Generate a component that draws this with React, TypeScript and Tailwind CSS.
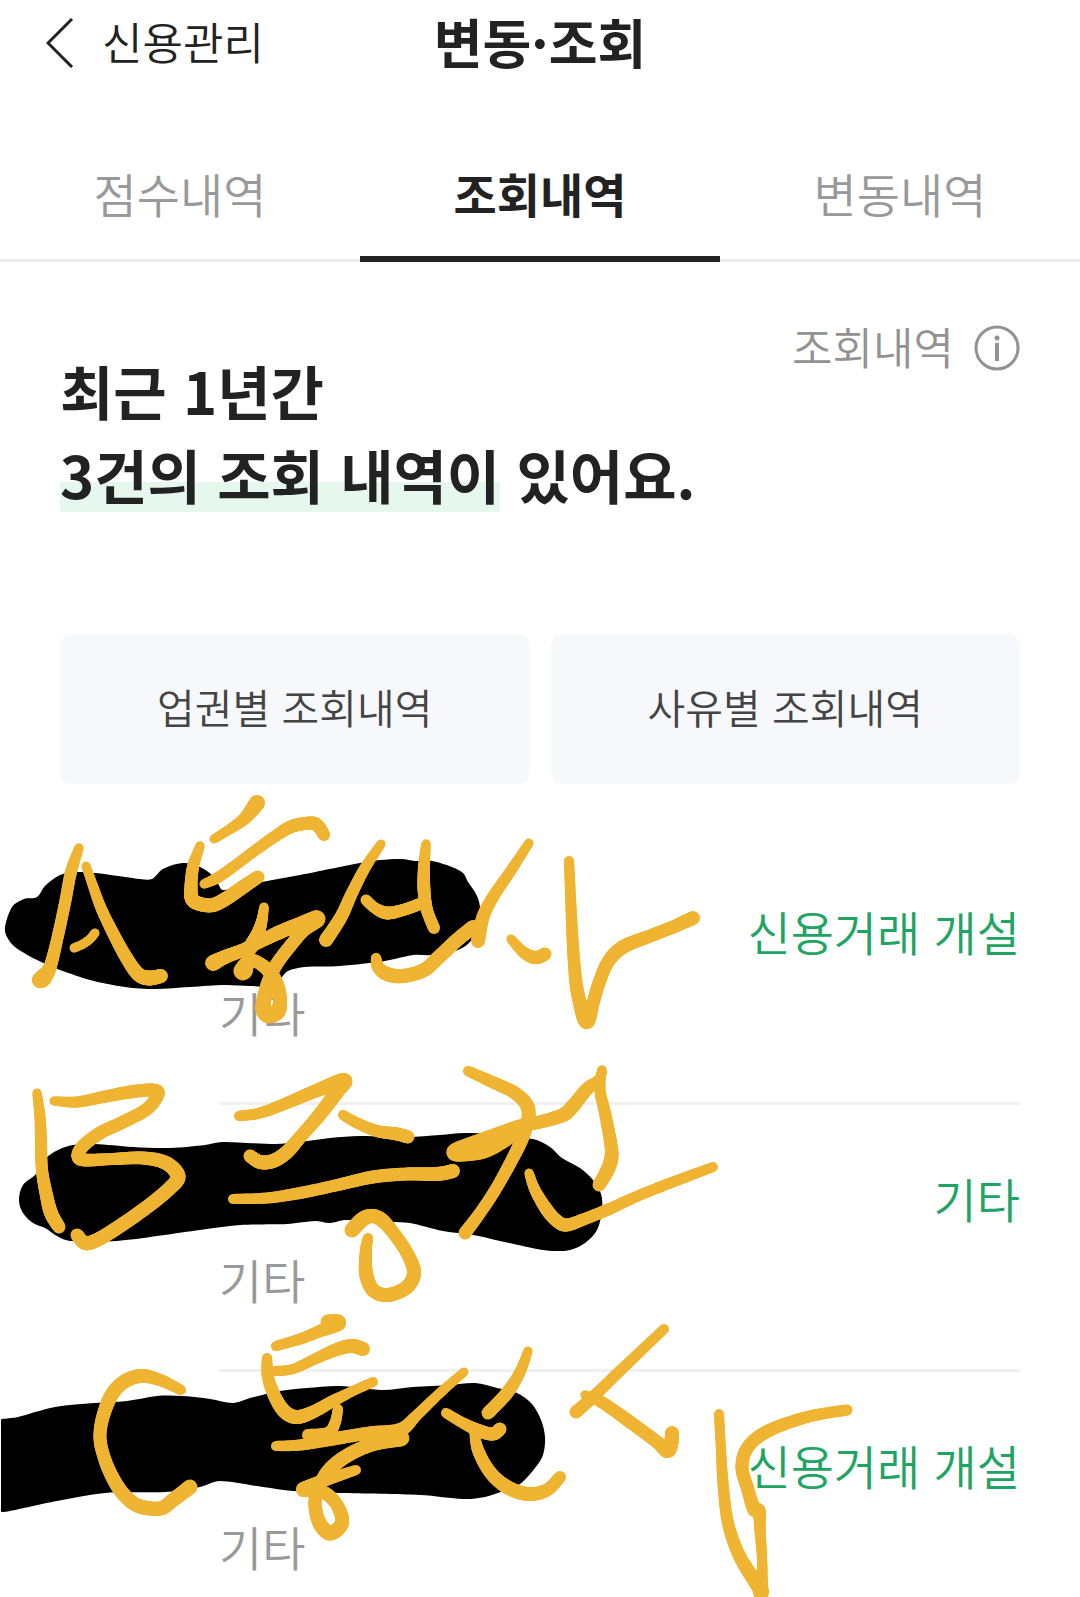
import clsx from 'clsx';

type Point = [number, number];
type BrushPoint = [number, number, number];

const tabs = ['점수내역', '조회내역', '변동내역'];

const filters = ['업권별 조회내역', '사유별 조회내역'];

const records = [
    { id: 1, reason: '신용거래 개설', category: '기타' },
    { id: 2, reason: '기타', category: '기타' },
    { id: 3, reason: '신용거래 개설', category: '기타' },
];

// Marker patches over the company names
const patches: Point[][] = [
    [
        [5, 927], [12, 907], [24, 899], [37, 897], [45, 886], [60, 875], [75, 872], [95, 873], [125, 877],
        [140, 879], [152, 879], [163, 869], [183, 863], [200, 867], [214, 877], [221, 889], [223, 890],
        [230, 889], [262, 882], [300, 875], [360, 863], [380, 860], [402, 859], [415, 861], [432, 861],
        [452, 867], [463, 873], [468, 882], [476, 894], [480, 907], [478, 925], [470, 942], [455, 951],
        [432, 955], [413, 955], [385, 961], [340, 966], [305, 967], [288, 971], [280, 979], [270, 986],
        [250, 986], [225, 985], [190, 987], [155, 989], [125, 987], [90, 980], [55, 968], [35, 959],
        [15, 947], [7, 937],
    ],
    [
        [19, 1200], [23, 1185], [36, 1174], [45, 1159], [58, 1150], [73, 1145], [95, 1144], [133, 1147],
        [170, 1148], [205, 1145], [222, 1142], [275, 1144], [300, 1142], [330, 1138], [360, 1136],
        [407, 1137], [440, 1135], [465, 1133], [490, 1134], [533, 1139], [550, 1147], [562, 1158],
        [580, 1168], [593, 1180], [601, 1194], [602, 1210], [597, 1230], [585, 1243], [570, 1250],
        [553, 1251], [537, 1249], [500, 1241], [473, 1235], [443, 1231], [410, 1223], [390, 1222],
        [345, 1220], [330, 1223], [315, 1221], [287, 1224], [240, 1225], [200, 1230], [117, 1241],
        [70, 1241], [57, 1236], [45, 1228], [33, 1223], [23, 1213],
    ],
    [
        [1, 1420], [2, 1419], [18, 1417], [55, 1407], [95, 1403], [127, 1401], [157, 1396], [183, 1396],
        [210, 1399], [233, 1403], [250, 1398], [280, 1391], [307, 1388], [340, 1386], [382, 1390],
        [413, 1387], [450, 1385], [475, 1383], [497, 1388], [517, 1393], [532, 1404], [541, 1420],
        [545, 1437], [543, 1455], [535, 1468], [520, 1484], [503, 1491], [485, 1497], [463, 1499],
        [420, 1495], [340, 1493], [293, 1491], [263, 1487], [220, 1481], [200, 1487], [165, 1492],
        [105, 1493], [57, 1501], [10, 1511], [2, 1512], [1, 1511], [1, 1505], [1, 1426],
    ],
];

// Pen strokes: x, y and the radius of the pen at that point
const strokes: BrushPoint[][] = [
    [[79, 848, 4], [71, 872, 5.5], [65, 903, 5.5], [57, 940, 5.5], [50, 967, 6], [43, 978, 8], [40, 980, 7.5]],
    [[86, 866, 4], [93, 886, 4.5], [101, 908, 5], [113, 933, 5.5], [126, 957, 6], [138, 974, 6.5], [149, 978, 7], [161, 976, 6.5]],
    [[74, 948, 4], [83, 944, 4], [90, 939, 4], [95, 933, 4]],
    [[214, 839, 4], [230, 829, 4.5], [243, 820, 5.5], [251, 811, 6.5], [257, 803, 7.5]],
    [[204, 884, 4], [217, 878, 5], [233, 867, 5], [253, 852, 5], [277, 835, 5.5], [293, 826, 6], [312, 823, 6], [319, 827, 6], [324, 835, 5.5]],
    [[200, 846, 4], [193, 867, 5.5], [191, 887, 6], [192, 899, 6.5], [200, 904, 6.5], [213, 905, 6.5], [227, 898, 6.5], [243, 887, 6.5], [258, 877, 6]],
    [[264, 907, 4], [262, 920, 5], [258, 933, 6], [250, 948, 7]],
    [[213, 963, 7.5], [225, 957, 6.5], [243, 950, 6], [257, 943, 6], [280, 932, 6.5], [300, 924, 6.5], [317, 919, 8], [303, 931, 6], [291, 945, 6], [278, 962, 6], [271, 975, 6], [266, 990, 6.5], [263, 1008, 7], [268, 1015, 7.5], [277, 1012, 7.5], [280, 1003, 6.5], [278, 988, 6.5], [272, 975, 6.5], [262, 965, 6], [250, 960, 5.5], [243, 971, 9]],
    [[381, 844, 4], [365, 868, 5], [352, 893, 5.5], [341, 917, 6], [326, 940, 6.5]],
    [[366, 900, 5], [375, 908, 5], [387, 913, 6], [403, 910, 5.5], [420, 904, 5.5]],
    [[426, 844, 4], [424, 867, 5.5], [424, 890, 6], [427, 910, 5.5], [434, 928, 5.5]],
    [[376, 958, 4.5], [378, 967, 5.5], [387, 974, 6.5], [403, 976, 6.5], [424, 970, 6.5], [440, 956, 6.5], [457, 940, 6.5], [473, 927, 6.5]],
    [[529, 843, 4], [510, 872, 5], [493, 897, 5.5], [483, 917, 6], [478, 941, 6.5]],
    [[511, 939, 4], [522, 951, 5], [532, 957, 6], [539, 957, 6], [545, 954, 6]],
    [[569, 861, 4.5], [571, 907, 5], [573, 947, 5.5], [576, 983, 6], [581, 1007, 6.5], [587, 1021, 7.5], [593, 1003, 6], [599, 983, 6], [608, 962, 6], [623, 947, 6.5], [650, 936, 6], [673, 927, 6], [693, 918, 6.5]],

    [[37, 1093, 4], [40, 1117, 5], [41, 1143, 5.5], [42, 1170, 5.5], [46, 1193, 6], [51, 1213, 6.5], [59, 1227, 6]],
    [[54, 1101, 4], [77, 1102, 5], [103, 1097, 5.5], [130, 1092, 6], [152, 1090, 6], [158, 1094, 6], [147, 1109, 6], [123, 1122, 6], [100, 1133, 6], [83, 1146, 6], [78, 1156, 6], [85, 1160, 6], [113, 1159, 5.5], [143, 1158, 6], [166, 1163, 6.5], [178, 1176, 7], [170, 1188, 6.5], [147, 1207, 6.5], [117, 1228, 6.5], [97, 1240, 6.5], [85, 1243, 6.5], [77, 1235, 6]],
    [[239, 1116, 4.5], [260, 1113, 5], [287, 1103, 5.5], [313, 1092, 6], [343, 1081, 7.5], [338, 1090, 7], [321, 1113, 6.5], [302, 1135, 6], [287, 1152, 6.5], [273, 1161, 6.5], [260, 1162, 6.5], [250, 1156, 6]],
    [[343, 1115, 4.5], [357, 1123, 5], [377, 1131, 5.5], [397, 1134, 6], [408, 1137, 6]],
    [[233, 1199, 4.5], [267, 1198, 5], [300, 1193, 5.5], [333, 1186, 5.5], [373, 1177, 6], [407, 1174, 6], [437, 1174, 6.5], [453, 1171, 6.5]],
    [[352, 1230, 7], [363, 1219, 7], [373, 1216, 6.5], [383, 1221, 6.5], [395, 1235, 6], [407, 1253, 6], [414, 1272, 6.5], [407, 1287, 6.5], [388, 1295, 6.5], [373, 1290, 6.5], [366, 1273, 6.5], [366, 1250, 5.5], [368, 1238, 4.5]],
    [[468, 1071, 4.5], [490, 1081, 5.5], [515, 1093, 6], [528, 1108, 6.5], [526, 1128, 6], [517, 1150, 6], [497, 1187, 5.5], [480, 1213, 5.5], [465, 1233, 6]],
    [[602, 1070, 4], [599, 1080, 5], [587, 1089, 6], [573, 1106, 6.5], [563, 1115, 6.5], [540, 1122, 6], [520, 1126, 6], [493, 1136, 6.5], [455, 1152, 8], [480, 1152, 7], [500, 1144, 6], [520, 1131, 5]],
    [[602, 1070, 4], [600, 1090, 5], [605, 1113, 5.5], [611, 1145, 6], [611, 1160, 6.5], [606, 1173, 6.5], [599, 1185, 6]],
    [[529, 1173, 4], [535, 1190, 5], [547, 1210, 6], [557, 1221, 6], [567, 1225, 6], [587, 1218, 5.5], [607, 1210, 5.5], [640, 1195, 5], [673, 1182, 5], [713, 1167, 4.5]],

    [[181, 1390, 4.5], [160, 1380, 5.5], [140, 1376, 6.5], [121, 1384, 6.5], [108, 1402, 6.5], [100, 1433, 6], [105, 1460, 6], [118, 1487, 6.5], [133, 1503, 6.5], [147, 1508, 6.5], [162, 1508, 6.5], [173, 1500, 6.5], [190, 1487, 7]],
    [[276, 1346, 4.5], [300, 1339, 5], [320, 1331, 5.5], [338, 1323, 7.5], [328, 1322, 7]],
    [[275, 1371, 4.5], [293, 1369, 4.5], [317, 1358, 5], [338, 1349, 6], [352, 1346, 6.5], [363, 1349, 6.5]],
    [[267, 1358, 4.5], [268, 1377, 5.5], [275, 1397, 6], [285, 1412, 6.5], [297, 1417, 6.5], [313, 1412, 6], [333, 1401, 5.5], [353, 1391, 4.5], [373, 1382, 4.5]],
    [[338, 1409, 4.5], [335, 1423, 5], [328, 1433, 5.5], [308, 1435, 5.5]],
    [[276, 1446, 4.5], [300, 1445, 5], [333, 1439, 6], [370, 1433, 6], [400, 1430, 6.5], [417, 1415, 5], [440, 1393, 4.5], [464, 1372, 4]],
    [[401, 1438, 8], [373, 1444, 6.5], [350, 1454, 6.5], [333, 1466, 6.5], [322, 1480, 6], [315, 1500, 6], [319, 1522, 6.5], [330, 1533, 7], [342, 1523, 6.5], [337, 1505, 6], [323, 1492, 6], [303, 1490, 6.5]],
    [[303, 1489, 6.5], [320, 1482, 6], [356, 1470, 4.5]],
    [[528, 1351, 4], [520, 1372, 5], [507, 1393, 6], [488, 1413, 6]],
    [[446, 1413, 4.5], [463, 1423, 5], [480, 1431, 6], [493, 1434, 6], [500, 1429, 6]],
    [[474, 1430, 4], [478, 1450, 5.5], [490, 1472, 6], [507, 1487, 6.5], [528, 1494, 6.5], [547, 1490, 6], [560, 1477, 5.5]],
    [[664, 1329, 4.5], [623, 1368, 5], [593, 1397, 5.5], [576, 1412, 6]],
    [[585, 1395, 4], [603, 1403, 5.5], [630, 1422, 6], [657, 1442, 6], [667, 1451, 6.5], [671, 1445, 6.5], [672, 1433, 6.5]],
    [[719, 1414, 4.5], [721, 1450, 4.5], [723, 1483, 5], [728, 1523, 5.5], [740, 1557, 6], [759, 1587, 7], [761, 1592, 7], [762, 1576, 5], [762, 1557, 4.5], [760, 1530, 5], [759, 1511, 6], [754, 1509, 6.5], [748, 1490, 6], [742, 1467, 6], [748, 1447, 6], [768, 1431, 6], [807, 1417, 5.5], [847, 1410, 5]],
];

function spline(a: number, b: number, c: number, d: number, t: number) {
    return (
        0.5 *
        (2 * b +
            (c - a) * t +
            (2 * a - 5 * b + 4 * c - d) * t * t +
            (3 * b - a - 3 * c + d) * t * t * t)
    );
}

function smooth(points: BrushPoint[]) {
    const result: BrushPoint[] = [points[0]];
    for (let i = 0; i < points.length - 1; i++) {
        const a = points[Math.max(i - 1, 0)];
        const b = points[i];
        const c = points[i + 1];
        const d = points[Math.min(i + 2, points.length - 1)];
        for (let step = 1; step <= 10; step++) {
            const t = step / 10;
            result.push([
                spline(a[0], b[0], c[0], d[0], t),
                spline(a[1], b[1], c[1], d[1], t),
                b[2] + (c[2] - b[2]) * t,
            ]);
        }
    }
    return result;
}

// Closed curve through all the points of a patch. The handles are kept
// shorter than the side they belong to, so close points make a corner.
function outline(points: Point[]) {
    const n = points.length;
    const handle = (from: Point, to: Point, length: number): Point => {
        const dx = to[0] - from[0];
        const dy = to[1] - from[1];
        const size = Math.hypot(dx, dy) || 1;
        const scale = Math.min(size / 6, length / 3) / size;
        return [dx * scale, dy * scale];
    };
    const curves = points.map((b, i) => {
        const a = points[(i + n - 1) % n];
        const c = points[(i + 1) % n];
        const d = points[(i + 2) % n];
        const length = Math.hypot(c[0] - b[0], c[1] - b[1]);
        const out = handle(a, c, length);
        const back = handle(b, d, length);
        return `C${b[0] + out[0]} ${b[1] + out[1]} ${c[0] - back[0]} ${c[1] - back[1]} ${c[0]} ${c[1]}`;
    });
    return `M${points[0][0]} ${points[0][1]}${curves.join('')}Z`;
}

function Brush({ points }: { points: BrushPoint[] }) {
    const line = smooth(points);
    return (
        <g>
            {line.slice(1).map(([x, y, r], i) => (
                <line key={i} x1={line[i][0]} y1={line[i][1]} x2={x} y2={y} strokeWidth={r * 2 + 1} />
            ))}
        </g>
    );
}

function Doodles() {
    return (
        <svg
            aria-hidden="true"
            viewBox="0 784 1080 813"
            className="pointer-events-none absolute inset-0 h-full w-full">
            <g fill="#000">
                {patches.map((patch, i) => (
                    <path key={i} d={outline(patch)} />
                ))}
            </g>
            <g stroke="#efb432" strokeLinecap="round">
                {strokes.map((points, i) => (
                    <Brush key={i} points={points} />
                ))}
            </g>
        </svg>
    );
}

function Header() {
    return (
        <header className="grid h-[86px] grid-cols-3 items-center">
            <a href="#credit" className="flex items-center gap-7 pl-[46px] text-[44px] leading-none font-[350]">
                <svg viewBox="0 0 28 50" className="h-[50px] w-7" fill="none" stroke="currentColor" strokeWidth="3">
                    <path d="M26 1 2 25l24 24" />
                </svg>
                <span className="pb-1">신용관리</span>
            </a>
            <h1 className="pb-1 text-center text-[53px] leading-none font-bold">변동·조회</h1>
        </header>
    );
}

function Tabs() {
    return (
        <nav className="mt-[42px] grid h-[134px] grid-cols-3 shadow-[inset_0_-3px_#ebebeb]">
            {tabs.map((tab, i) => (
                <button
                    key={tab}
                    className={clsx(
                        'pb-1 text-[47px]',
                        i === 1
                            ? 'font-bold shadow-[inset_0_-6px_#222]'
                            : 'font-[350] text-[#999]'
                    )}>
                    {tab}
                </button>
            ))}
        </nav>
    );
}

function Summary() {
    return (
        <section className="px-[60px] pt-[63px]">
            <div className="flex items-start justify-between">
                <h2 className="mt-[23px] text-[58px] leading-[84px] font-bold whitespace-nowrap">
                    최근 1년간
                    <br />
                    <span className="inline-block bg-[linear-gradient(transparent_50px,#e6f7ee_50px,#e6f7ee_80px,transparent_80px)]">
                        3건의 조회 내역이
                    </span>{' '}
                    있어요.
                </h2>
                <button className="-ml-40 flex items-center gap-5 text-[44px] leading-[41px] font-[350] text-[#929292]">
                    <span className="pb-1">조회내역</span>
                    <svg viewBox="0 0 46 46" className="size-[46px]" fill="none" stroke="currentColor" strokeWidth="3">
                        <circle cx="23" cy="23" r="21" />
                        <path d="M23 18v18" strokeWidth="4" />
                        <circle cx="23" cy="13" r="2.5" fill="currentColor" stroke="none" />
                    </svg>
                </button>
            </div>
            <div className="mt-[118px] grid grid-cols-2 gap-[21px]">
                {filters.map((filter) => (
                    <button
                        key={filter}
                        className="h-[150px] rounded-xl bg-[#f6f8fc] pb-1 text-[41px] font-[350] text-[#444]">
                        {filter}
                    </button>
                ))}
            </div>
        </section>
    );
}

function Records() {
    return (
        <section className="relative px-[60px] pt-[54px]">
            <ul className="pl-[159px] text-[47px] leading-[62px] font-[350]">
                {records.map(({ id, reason, category }) => (
                    <li
                        key={id}
                        className="flex flex-col gap-[19px] border-b-3 border-[#f0f0f0] pt-[62px] pb-[59px] last:border-b-0 last:pb-5">
                        <p className="text-right text-[#1fa463]">{reason}</p>
                        <p className="text-[#999]">{category}</p>
                    </li>
                ))}
            </ul>
            <Doodles />
        </section>
    );
}

export default function App() {
    return (
        <main
            lang="ko"
            className="overflow-hidden bg-white font-['Noto_Sans_CJK_KR',sans-serif] text-[#222]">
            <Header />
            <Tabs />
            <Summary />
            <Records />
        </main>
    );
}
